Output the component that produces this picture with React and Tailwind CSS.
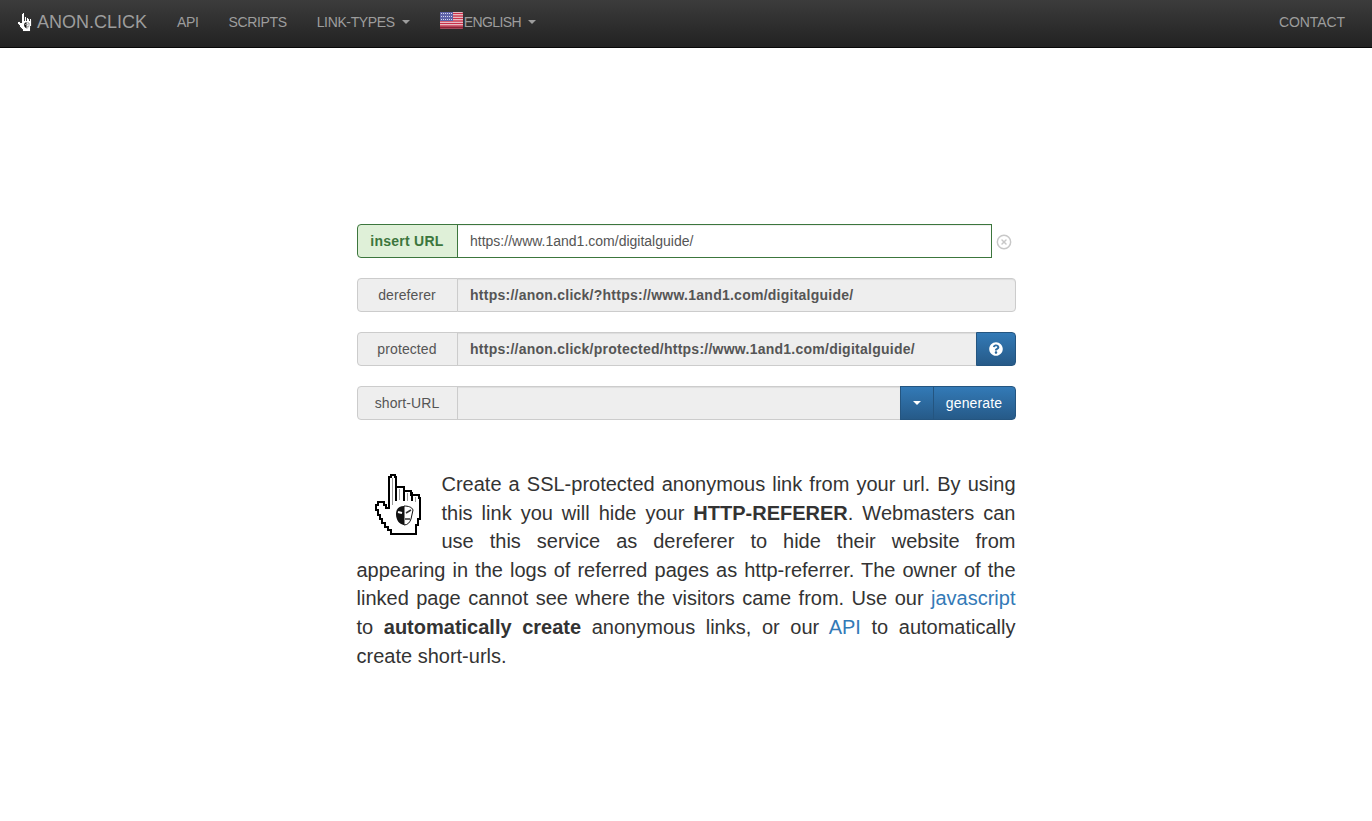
import React from 'react'
import { CircleX } from 'lucide-react'
import { FaQuestionCircle } from 'react-icons/fa'

const HAND_OUTLINE =
  'M13 3h2V1h4v2h1v10h8v4h7v4h8v3h1v21h-2v6h-2v9H15v-4h-3v-3H9v-4H6v-4H4v-4H2v-5H0v-5h2v-3h6v3h2v3h3z'

const HandIcon = ({ className, stroke = '#000', strokeWidth = 2.2, detail = true }) => (
  <svg className={className} viewBox="-2 -1 50 64" shapeRendering="crispEdges">
    <path d={HAND_OUTLINE} fill="#fff" stroke={stroke} strokeWidth={strokeWidth} />
    <path d="M20 13v14M28 14v13M36 18v9" fill="none" stroke={stroke} strokeWidth={strokeWidth} />
    {detail && <path d="M16 4v27M23 15v11M31 19v8M39 23v5" fill="none" stroke="#9a9a9a" strokeWidth="1" />}
    {/* mask on the palm */}
    <g shapeRendering="auto">
      <path d="M28 32c-5 0-8 3-8 8 0 6 3 10 8 11z" fill="#111" />
      <path d="M28 32c4 0 8 1 9 4l-2 9c-1 3-3 6-7 6z" fill="#fff" stroke="#111" strokeWidth="1" />
      <path d="M22 38l4 1" stroke="#fff" strokeWidth="2" fill="none" />
      <path d="M30 39l5-3M29 45h5" stroke="#333" strokeWidth="1.5" fill="none" />
    </g>
  </svg>
)

const FlagIcon = () => (
  <svg className="mb-[3px] h-[17px] w-[23px] shrink-0" viewBox="0 0 23 17">
    <rect width="23" height="17" rx="1" fill="#f1e8ea" />
    <path d="M0 1.5h23M0 4h23M0 6.5h23M0 9h23M0 11.5h23M0 14h23" stroke="#c9304a" strokeWidth="1.3" />
    <path d="M0 15.7h23" stroke="#8f2236" strokeWidth="2.2" />
    <rect width="13" height="9" fill="#5e62a8" />
    <path d="M1 1.5h11M1 4.5h11M1 7.5h11" stroke="#d5d6ee" strokeWidth="1" strokeDasharray="1 1" />
  </svg>
)

const Caret = () => (
  <span className="ml-[7px] inline-block h-0 w-0 border-x-4 border-t-4 border-x-transparent border-t-current align-middle" />
)

const NavItem = ({ children, caret }) => (
  <a href="#" className="flex items-center px-[15px] text-sm tracking-[-0.36px] text-[#9d9d9d] uppercase">
    {children}
    {caret && <Caret />}
  </a>
)

const addonClass =
  'flex w-[101px] shrink-0 items-center justify-center rounded-l border border-[#ccc] bg-[#eee] text-sm tracking-[0.1px] text-[#555]'
const fieldClass =
  '-ml-px min-w-0 flex-1 border border-[#ccc] bg-[#eee] pl-[12.5px] pr-3 text-sm text-[#555] shadow-[inset_0_1px_1px_rgba(0,0,0,0.075)] outline-none'

const ReadonlyRow = ({ label, value, children }) => (
  <div className="flex h-[34px]">
    <span className={addonClass}>{label}</span>
    <input
      readOnly
      value={value}
      className={`${fieldClass} font-bold tracking-[0.25px] ${children ? '' : 'rounded-r'}`}
    />
    {children}
  </div>
)

const blueBtn =
  'flex h-full items-center justify-center border border-[#245580] bg-gradient-to-b from-[#337ab7] to-[#265a88] text-sm text-white'

const App = () => {
  return (
    <div className="min-h-[821px] bg-white font-['Liberation_Sans',Arial,sans-serif]">
      {/* Navbar */}
      <nav className="flex h-12 border-b border-[#080808] bg-gradient-to-b from-[#3c3c3c] to-[#222] pb-[3px]">
        <a href="#" className="ml-[17px] flex items-center pr-[15px] text-lg text-[#9d9d9d] uppercase">
          <HandIcon className="mr-1 h-5 w-4" stroke="#333" strokeWidth={3} detail={false} />
          anon.click
        </a>
        <NavItem>API</NavItem>
        <NavItem>Scripts</NavItem>
        <NavItem caret>Link-types</NavItem>
        <NavItem caret>
          <FlagIcon />
          <span className="ml-px tracking-[-0.6px]">English</span>
        </NavItem>
        <div className="ml-auto mr-3 flex">
          <NavItem>
            <span className="tracking-[-0.1px]">Contact</span>
          </NavItem>
        </div>
      </nav>

      <main className="mx-auto w-[659px] pt-[176px]">
        {/* URL fields */}
        <div className="flex flex-col gap-5">
          <div className="flex h-[34px]">
            <span className="flex w-[101px] shrink-0 items-center justify-center rounded-l border border-[#3c763d] bg-[#dff0d8] text-sm font-bold tracking-[0.25px] text-[#3c763d]">
              insert URL
            </span>
            <input
              readOnly
              value="https://www.1and1.com/digitalguide/"
              className="-ml-px min-w-0 flex-1 border border-[#3c763d] bg-white pl-[12.5px] pr-3 text-sm text-[#555] shadow-[inset_0_1px_1px_rgba(0,0,0,0.075)] outline-none"
            />
            <span className="flex w-6 shrink-0 items-center justify-center pt-0.5">
              <CircleX className="h-4 w-4 text-[#c8c8c8]" strokeWidth={2.2} />
            </span>
          </div>

          <ReadonlyRow label="dereferer" value="https://anon.click/?https://www.1and1.com/digitalguide/" />

          <ReadonlyRow label="protected" value="https://anon.click/protected/https://www.1and1.com/digitalguide/">
            <button className={`${blueBtn} -ml-px w-10 rounded-r`}>
              <FaQuestionCircle className="h-[14px] w-[14px]" />
            </button>
          </ReadonlyRow>

          <ReadonlyRow label="short-URL" value="">
            <button className={`${blueBtn} -ml-px w-[34px]`}>
              <span className="inline-block h-0 w-0 border-x-4 border-t-4 border-x-transparent border-t-white" />
            </button>
            <button className={`${blueBtn} -ml-px w-[83px] rounded-r tracking-[0.15px]`}>generate</button>
          </ReadonlyRow>
        </div>

        {/* Description */}
        <div className="mt-[50.2px] text-justify text-xl leading-[28.57px] text-[#333]">
          <div className="float-left flex h-[85px] w-[85px] justify-start pl-[17px] pt-[3px]">
            <HandIcon className="h-[64px] w-[50px]" />
          </div>
          Create a SSL-protected anonymous link from your url. By using this link you will hide your{' '}
          <b>HTTP-REFERER</b>. Webmasters can use this service as dereferer to hide their website from appearing in
          the logs of referred pages as http-referrer. The owner of the linked page cannot see where the visitors
          came from. Use our <a href="#" className="text-[#337ab7]">javascript</a> to <b>automatically create</b>{' '}
          anonymous links, or our <a href="#" className="text-[#337ab7]">API</a> to automatically create short-urls.
        </div>
      </main>
    </div>
  )
}

export default App
